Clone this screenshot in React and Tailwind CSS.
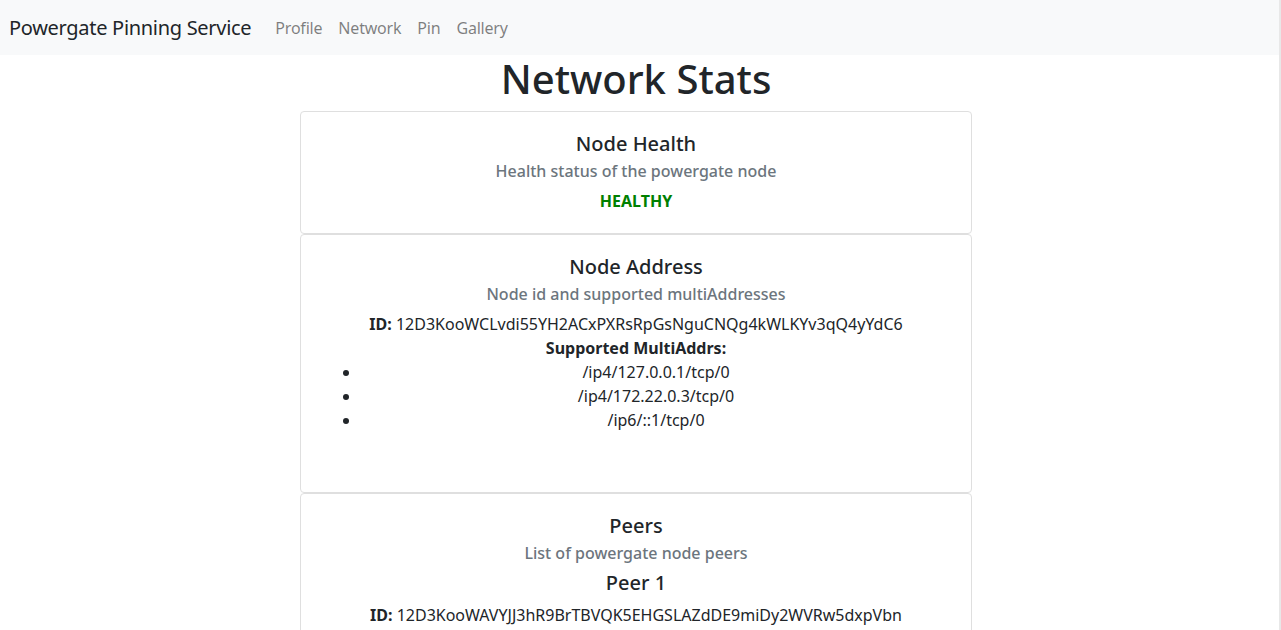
import React from "react";

const font = { fontFamily: '"Noto Sans", "Open Sans", sans-serif' };

function Card({ children, className = "" }) {
  return (
    <div className={`border border-[#dfdfdf] rounded-[4px] bg-white px-5 pt-5 text-center ${className}`}>
      {children}
    </div>
  );
}

export default function App() {
  const addrs = ["/ip4/127.0.0.1/tcp/0", "/ip4/172.22.0.3/tcp/0", "/ip6/::1/tcp/0"];

  return (
    <div className="flex h-[630px] overflow-hidden bg-white text-[#212529]" style={font}>
      <div className="flex-1 flex flex-col">
        {/* Navbar */}
        <nav className="h-[55px] bg-[#f8f9fa] flex items-center pl-[9px] shrink-0">
          <span className="text-[20px] leading-[30px] tracking-[-0.3px] mr-4">Powergate Pinning Service</span>
          <a className="px-2 text-[16px] tracking-[-0.2px] text-black/50">Profile</a>
          <a className="px-2 text-[16px] tracking-[-0.2px] text-black/50">Network</a>
          <a className="px-2 text-[16px] tracking-[-0.2px] text-black/50">Pin</a>
          <a className="px-2 text-[16px] tracking-[-0.2px] text-black/50">Gallery</a>
        </nav>

        <div className="ml-[300px] w-[672px]">
          <h1 className="text-[40px] leading-[48px] font-medium text-center mb-2">Network Stats</h1>

          {/* Node Health */}
          <Card className="pb-5">
            <h5 className="text-[20px] leading-[24px] font-medium">Node Health</h5>
            <h6 className="mt-[6px] text-[16px] leading-[19px] font-medium text-[#6c757d]">
              Health status of the powergate node
            </h6>
            <p className="mt-2 text-[16px] leading-[24px] font-bold text-[#008000]">HEALTHY</p>
          </Card>

          {/* Node Address */}
          <Card className="pb-[60px]">
            <h5 className="text-[20px] leading-[24px] font-medium">Node Address</h5>
            <h6 className="mt-[6px] text-[16px] leading-[19px] font-medium text-[#6c757d]">
              Node id and supported multiAddresses
            </h6>
            <p className="mt-2 text-[16px] leading-[24px]">
              <b className="font-bold">ID:</b> 12D3KooWCLvdi55YH2ACxPXRsRpGsNguCNQg4kWLKYv3qQ4yYdC6
            </p>
            <p className="text-[16px] leading-[24px] font-bold">Supported MultiAddrs:</p>
            <ul className="list-disc pl-10 text-[16px] leading-[24px]">
              {addrs.map((a) => (
                <li key={a}>{a}</li>
              ))}
            </ul>
          </Card>

          {/* Peers */}
          <Card className="pb-5">
            <h5 className="text-[20px] leading-[24px] font-medium">Peers</h5>
            <h6 className="mt-[6px] text-[16px] leading-[19px] font-medium text-[#6c757d]">
              List of powergate node peers
            </h6>
            <h5 className="mt-2 text-[20px] leading-[24px] font-medium">Peer 1</h5>
            <p className="mt-2 text-[16px] leading-[24px]">
              <b className="font-bold">ID:</b> 12D3KooWAVYJJ3hR9BrTBVQK5EHGSLAZdDE9miDy2WVRw5dxpVbn
            </p>
          </Card>
        </div>
      </div>
      {/* scrollbar track */}
      <div className="w-[2px] bg-[#e8e8e8] shrink-0" />
    </div>
  );
}
